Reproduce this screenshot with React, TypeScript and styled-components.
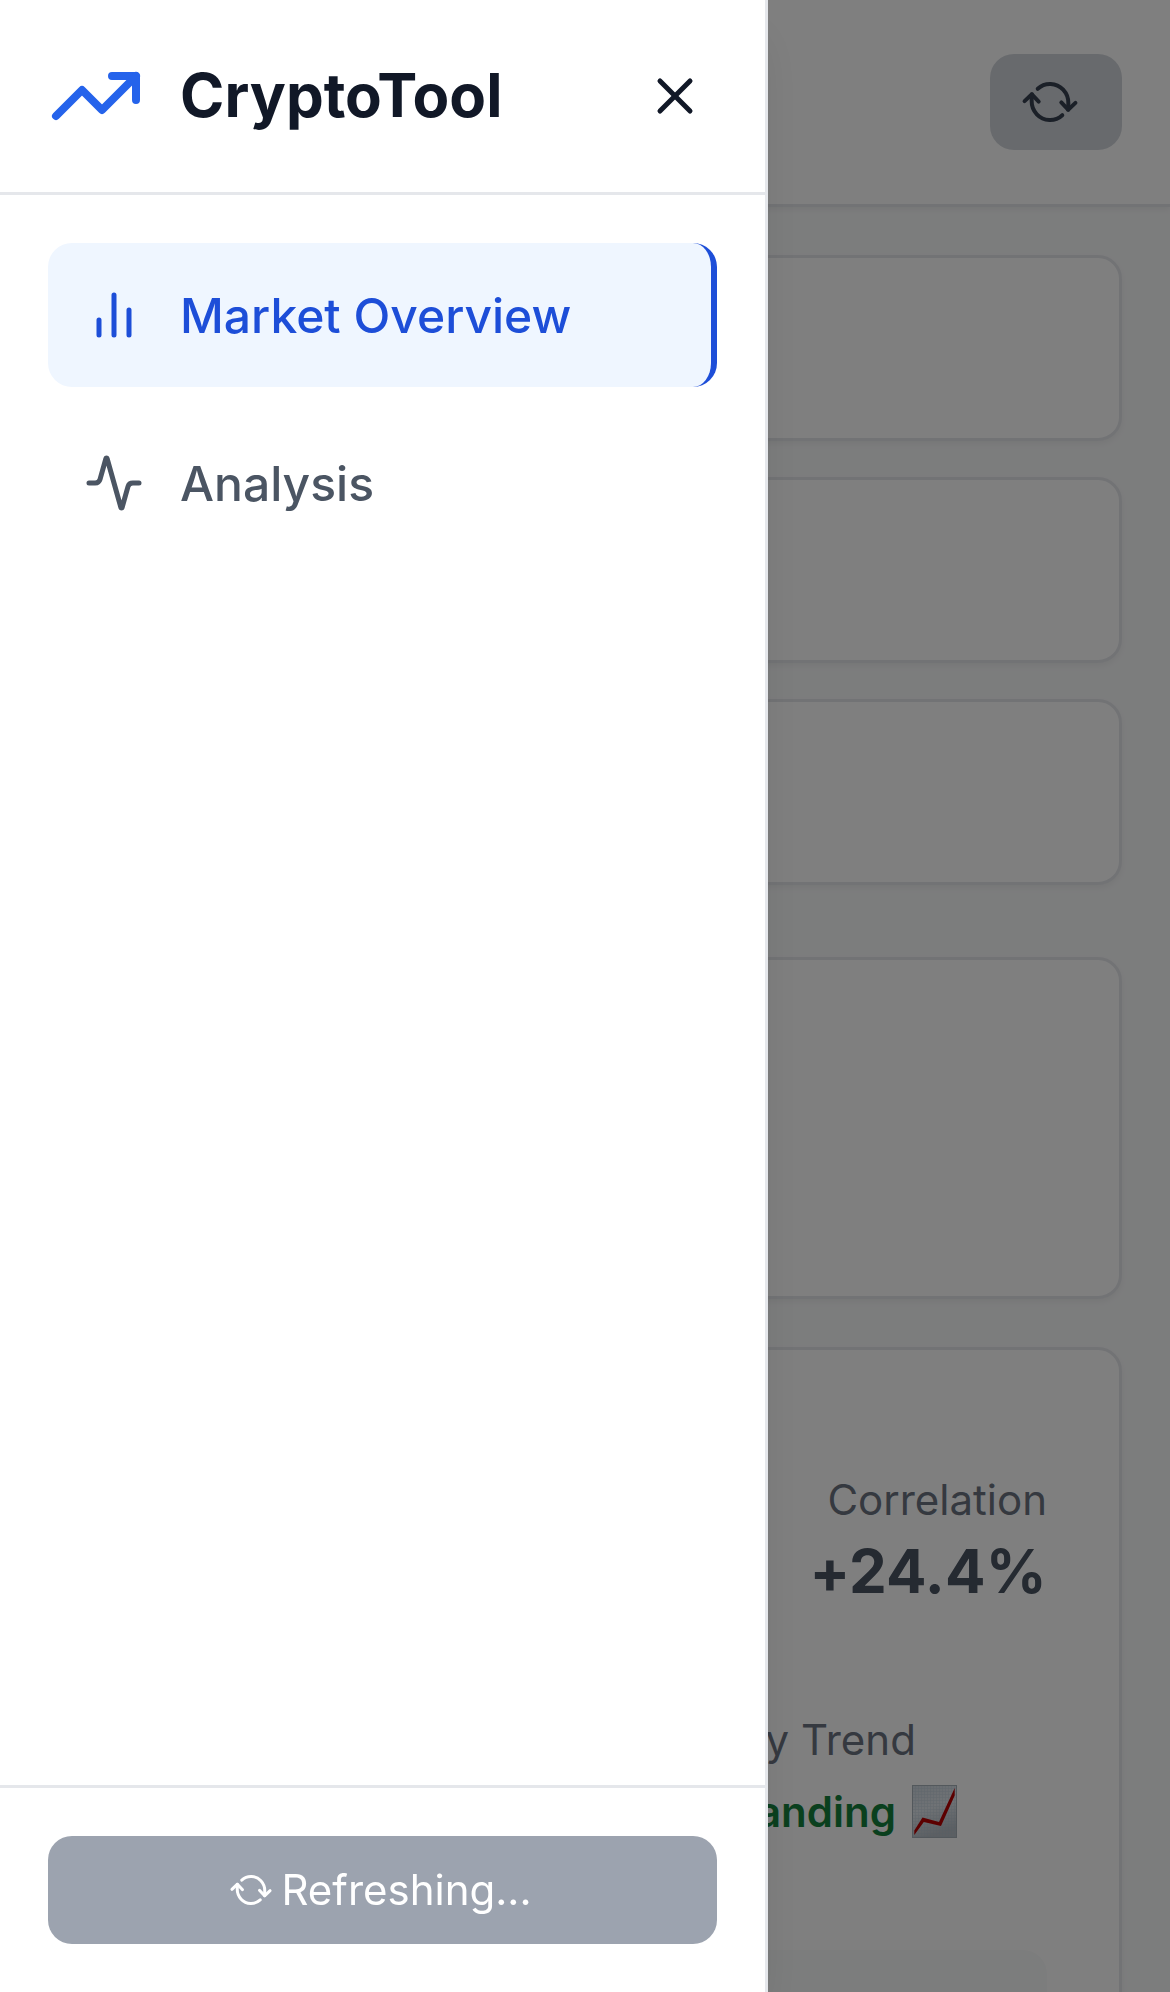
import React from "react";
import styled, { createGlobalStyle } from "styled-components";
import { Activity, RefreshCw, TrendingUp, X } from "lucide-react";

const GlobalStyle = createGlobalStyle`
  *, *::before, *::after { box-sizing: border-box; }
  html, body { margin: 0; padding: 0; height: 100%; overflow: hidden; }
  body {
    font-family: Inter, "Liberation Sans", sans-serif;
    background: #f9fafb;
    color: #111827;
  }
  button { font: inherit; border: 0; cursor: pointer; }
  svg { display: block; flex-shrink: 0; }
`;

const Page = styled.div`
  height: 1992px;
  overflow: hidden;
  display: flex;
  flex-direction: column;
`;

const PageHeader = styled.header`
  flex: none;
  height: 207px;
  padding: 0 48px;
  display: flex;
  align-items: center;
  justify-content: flex-end;
  background: #fff;
  border-bottom: 3px solid #e5e7eb;
  box-shadow: 0 3px 6px rgba(0, 0, 0, 0.05);
`;

const HeaderButton = styled.button`
  display: flex;
  align-items: center;
  gap: 12px;
  padding: 24px 48px 24px 36px;
  border-radius: 24px;
  background: #d1d5db;
  color: #374151;
`;

const SpinningIcon = styled(RefreshCw)`
  transform: rotate(47deg);
`;

const Main = styled.main`
  padding: 48px 48px 0;
  display: flex;
  flex-direction: column;
  gap: 48px;
`;

const StatList = styled.section`
  display: flex;
  flex-direction: column;
  gap: 36px;
  padding-bottom: 24px;
`;

const Card = styled.article<{ $height: number }>`
  flex: none;
  height: ${(p) => p.$height}px;
  padding: 72px;
  background: #fff;
  border: 3px solid #e5e7eb;
  border-radius: 24px;
  box-shadow: 0 3px 6px rgba(0, 0, 0, 0.05);
`;

const PairHeader = styled.div`
  height: 240px;
  margin-bottom: 48px;
  display: flex;
  align-items: center;
  justify-content: flex-end;
`;

const Correlation = styled.div`
  text-align: right;
`;

const Label = styled.div`
  font-size: 42px;
  line-height: 60px;
  color: #6b7280;
`;

const CorrelationValue = styled.div`
  font-size: 60px;
  line-height: 82px;
  padding-bottom: 2px;
  font-weight: 700;
  font-feature-settings: "calt" 0;
  letter-spacing: 0.2px;
  color: #4b5563;
`;

const MetricGrid = styled.div`
  display: grid;
  grid-template-columns: 1fr 1fr;
  gap: 48px;
`;

const Metric = styled.div`
  grid-column: 2;
  display: flex;
  flex-direction: column;
  gap: 12px;
  padding-left: 12px;
  white-space: nowrap;
`;

const TrendValue = styled.div`
  display: flex;
  align-items: center;
  gap: 16px;
  padding-left: 60px;
  font-size: 42px;
  line-height: 60px;
  font-weight: 600;
  color: #15803d;

  svg {
    margin-bottom: 2px;
  }
`;

const NoteBox = styled.div`
  height: 240px;
  margin-top: 108px;
  border-radius: 24px;
  background: #f9fafb;
`;

const Backdrop = styled.div`
  position: fixed;
  inset: 0;
  background: rgba(0, 0, 0, 0.5);
`;

const Sidebar = styled.aside`
  position: fixed;
  top: 0;
  bottom: 0;
  left: 0;
  width: 768px;
  display: flex;
  flex-direction: column;
  background: #fff;
  border-right: 3px solid #e5e7eb;
  box-shadow: 0 30px 45px -9px rgba(0, 0, 0, 0.1), 0 12px 18px -12px rgba(0, 0, 0, 0.1);
`;

const SidebarHeader = styled.div`
  display: flex;
  align-items: center;
  justify-content: space-between;
  padding: 48px;
  border-bottom: 3px solid #e5e7eb;
`;

const Brand = styled.div`
  display: flex;
  align-items: center;
  gap: 36px;
  color: #2563eb;
`;

const BrandName = styled.span`
  padding-bottom: 2px;
  font-size: 60px;
  line-height: 82px;
  font-weight: 700;
  color: #111827;
`;

const CloseButton = styled.button`
  padding: 12px;
  background: transparent;
  color: #111827;
`;

const Nav = styled.nav`
  flex: 1;
  display: flex;
  flex-direction: column;
  gap: 24px;
  padding: 48px;
`;

const NavItem = styled.button<{ $active?: boolean }>`
  display: flex;
  align-items: center;
  gap: 36px;
  width: 100%;
  padding: 36px;
  border-radius: 24px;
  border-right: ${(p) => (p.$active ? "6px solid #1d4ed8" : "0")};
  background: ${(p) => (p.$active ? "#eff6ff" : "transparent")};
  color: ${(p) => (p.$active ? "#1d4ed8" : "#4b5563")};
  font-size: 48px;
  font-weight: 500;
  text-align: left;
`;

const NavLabel = styled.span`
  padding-top: 2px;
  line-height: 70px;
`;

const SidebarFooter = styled.div`
  padding: 48px;
  border-top: 3px solid #e5e7eb;
`;

const RefreshButton = styled.button`
  display: flex;
  align-items: center;
  justify-content: center;
  gap: 12px;
  width: 100%;
  padding: 24px 36px;
  border-radius: 24px;
  background: #9ca3af;
  color: #fff;
  font-size: 42px;
  line-height: 60px;
`;

const BarsIcon = () => (
  <svg width="60" height="60" viewBox="0 0 24 24" fill="none" stroke="currentColor" strokeWidth="2" strokeLinecap="round">
    <path d="M18 20V10M12 20V4M6 20v-6" />
  </svg>
);

const ChartEmoji = () => (
  <svg width="45" height="53" viewBox="0 0 45 53" role="img" aria-label="Chart increasing">
    <defs>
      <linearGradient id="paper" x1="0" y1="0" x2="0.3" y2="1">
        <stop offset="0" stopColor="#cdd6de" />
        <stop offset="0.5" stopColor="#e0e6ec" />
        <stop offset="1" stopColor="#b8bfc6" />
      </linearGradient>
      <pattern id="grid" width="3" height="3" patternUnits="userSpaceOnUse">
        <path d="M0 0.5H3M0.5 0V3" stroke="#a9bccb" strokeWidth="0.6" />
      </pattern>
    </defs>
    <rect width="45" height="53" fill="url(#paper)" />
    <rect width="45" height="53" fill="url(#grid)" opacity="0.4" />
    <rect x="0.5" y="0.5" width="44" height="52" fill="none" stroke="#a6b0b9" strokeWidth="1" />
    <path d="M2.3 45.5L10.5 32.6L27 37L42.7 3V10.5L29 41L11.8 37L2.3 50Z" fill="#b90000" />
  </svg>
);

export default function App() {
  return (
    <>
      <GlobalStyle />
      <Page>
        <PageHeader>
          <HeaderButton aria-label="Refresh">
            <SpinningIcon size={48} />
          </HeaderButton>
        </PageHeader>
        <Main>
          <StatList>
            <Card $height={186} />
            <Card $height={186} />
            <Card $height={186} />
          </StatList>
          <Card $height={342} />
          <Card $height={900}>
            <PairHeader>
              <Correlation>
                <Label>Correlation</Label>
                <CorrelationValue>+24.4%</CorrelationValue>
              </Correlation>
            </PairHeader>
            <MetricGrid>
              <Metric>
                <Label>Volatility Trend</Label>
                <TrendValue>
                  Expanding
                  <ChartEmoji />
                </TrendValue>
              </Metric>
            </MetricGrid>
            <NoteBox />
          </Card>
        </Main>
      </Page>
      <Backdrop />
      <Sidebar>
        <SidebarHeader>
          <Brand>
            <TrendingUp size={96} />
            <BrandName>CryptoTool</BrandName>
          </Brand>
          <CloseButton aria-label="Close menu">
            <X size={60} />
          </CloseButton>
        </SidebarHeader>
        <Nav>
          <NavItem $active>
            <BarsIcon />
            <NavLabel>Market Overview</NavLabel>
          </NavItem>
          <NavItem>
            <Activity size={60} />
            <NavLabel>Analysis</NavLabel>
          </NavItem>
        </Nav>
        <SidebarFooter>
          <RefreshButton>
            <SpinningIcon size={36} />
            Refreshing...
          </RefreshButton>
        </SidebarFooter>
      </Sidebar>
    </>
  );
}
